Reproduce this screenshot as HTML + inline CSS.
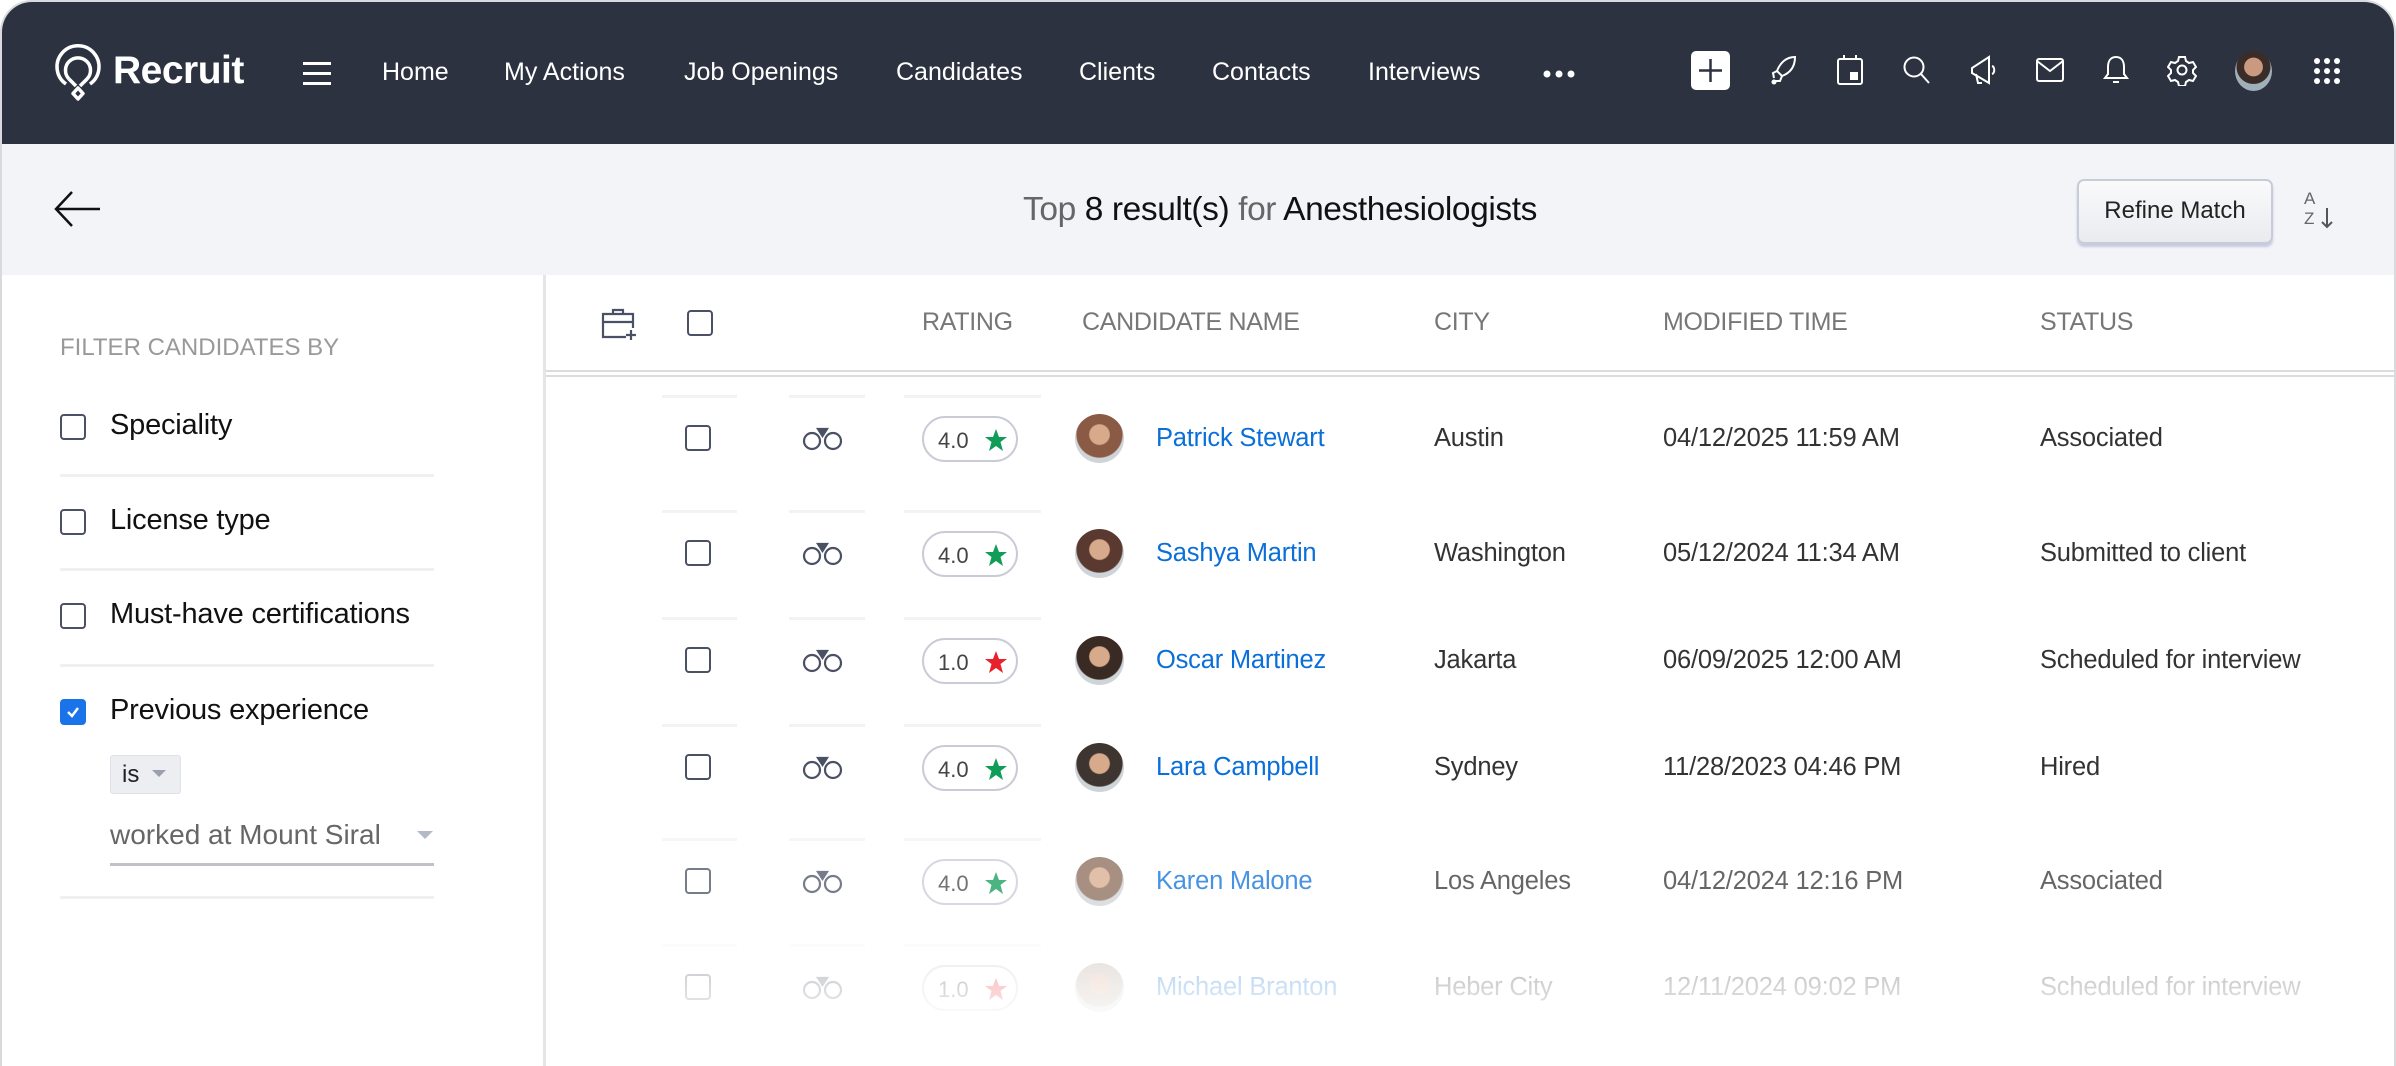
<!DOCTYPE html>
<html><head><meta charset="utf-8"><style>
*{margin:0;padding:0;box-sizing:border-box}
html,body{width:2396px;height:1066px;overflow:hidden}
body{background:#fff;font-family:"Liberation Sans",sans-serif;position:relative}
.a{position:absolute;white-space:nowrap}
.frame{position:absolute;left:0;top:0;width:2396px;height:1066px;border:2px solid #d9dadd;border-bottom:0;border-radius:32px 32px 0 0;overflow:hidden;background:#fff}
.nav{position:absolute;left:0;top:0;width:2396px;height:142px;background:#2c3240}
.nav .t{color:#fff;font-size:25px;top:56px}
.hdr{position:absolute;left:0;top:142px;width:2396px;height:131px;background:#f3f4f8}
.ic{position:absolute;top:52px}
.cb{position:absolute;width:26px;height:26px;border:2.5px solid #4a5164;border-radius:4px;background:#fff}
.hd{color:#777;font-size:25px;top:306px;letter-spacing:-0.3px}
.ft{font-size:29px;color:#111;letter-spacing:-0.2px}
.dv{position:absolute;height:3px;background:#f0f0f2;left:58px;width:374px}
.cell{font-size:25.5px;color:#333;letter-spacing:-0.2px}
.nm{font-size:25.5px;color:#0a6fd8;letter-spacing:-0.2px}
.pill{position:absolute;width:96px;height:46px;border:2px solid #c9ccd6;border-radius:23px;background:#fff}
.pill span{position:absolute;left:14px;top:10px;font-size:22px;color:#444}
.pill svg{position:absolute;left:60px;top:10px}
.av{position:absolute;width:49px;height:49px;border-radius:50%}
.seg{position:absolute;height:3px;background:#f3f3f5}
</style></head><body>
<div class="frame">
<div class="nav">
<svg class="a" style="left:50px;top:42px" width="52" height="58" viewBox="0 0 52 58" fill="none" stroke="#fff" stroke-width="3.5" stroke-linejoin="round"><path d="M14 40 A21 21 0 1 1 38 40"/><path d="M17 35 A12.5 12.5 0 1 1 35 35 L28 42"/><path d="M17 35 L24 42"/><path d="M26 44 L31 49.5 L26 55 L21 49.5 Z"/></svg>
<div class="a" style="left:111px;top:47px;color:#fff;font-size:39px;font-weight:bold;letter-spacing:-0.5px">Recruit</div>
<svg class="a" style="left:301px;top:60px" width="28" height="24"><rect y="0" width="28" height="3" fill="#fff"/><rect y="10" width="28" height="3" fill="#fff"/><rect y="20" width="28" height="3" fill="#fff"/></svg>
<div class="a t" style="left:380px">Home</div>
<div class="a t" style="left:502px">My Actions</div>
<div class="a t" style="left:682px">Job Openings</div>
<div class="a t" style="left:894px">Candidates</div>
<div class="a t" style="left:1077px">Clients</div>
<div class="a t" style="left:1210px">Contacts</div>
<div class="a t" style="left:1366px">Interviews</div>
<svg class="a" style="left:1541px;top:68px" width="32" height="8"><circle cx="4" cy="4" r="3.5" fill="#fff"/><circle cx="16" cy="4" r="3.5" fill="#fff"/><circle cx="28" cy="4" r="3.5" fill="#fff"/></svg>
<div class="a" style="left:1689px;top:49px;width:39px;height:39px;background:#fff;border-radius:5px"></div>
<svg class="a" style="left:1694px;top:54px" width="29" height="29"><path d="M14.5 3V26M3 14.5H26" stroke="#2c3240" stroke-width="2.5"/></svg>
<svg class="ic" style="left:1766px" width="30" height="32" viewBox="0 0 30 32" fill="none" stroke="#fff" stroke-width="2"><path d="M27 3 C18 3 12 9 9 17 L14 22 C22 19 27 13 27 3Z"/><path d="M9 17 L5 19 L6 24 M14 22 L12 27 L7 27"/><circle cx="6" cy="28" r="1.5" fill="#fff"/></svg>
<svg class="ic" style="left:1834px" width="28" height="32" viewBox="0 0 28 32" fill="none" stroke="#fff" stroke-width="2"><rect x="2" y="5" width="24" height="25" rx="2"/><path d="M8 1V6M20 1V6"/><rect x="15" y="19" width="6" height="6" fill="#fff"/></svg>
<svg class="ic" style="left:1900px" width="30" height="32" viewBox="0 0 30 32" fill="none" stroke="#fff" stroke-width="2"><circle cx="12" cy="13" r="9.5"/><path d="M19 20L27 29"/></svg>
<svg class="ic" style="left:1966px" width="30" height="32" viewBox="0 0 30 32" fill="none" stroke="#fff" stroke-width="2"><path d="M21 3 L4 14 L4 19 L21 29 Z"/><path d="M8 20 L10 29 L14 29"/><path d="M24 12 C27 13 27 19 24 20"/></svg>
<svg class="ic" style="left:2033px" width="30" height="32" viewBox="0 0 30 32" fill="none" stroke="#fff" stroke-width="2"><rect x="2" y="5" width="26" height="22" rx="2"/><path d="M2 7 L15 17 L28 7"/></svg>
<svg class="ic" style="left:2100px" width="28" height="32" viewBox="0 0 28 32" fill="none" stroke="#fff" stroke-width="2"><path d="M14 3 C8 3 6 8 6 13 L6 20 L3 24 L25 24 L22 20 L22 13 C22 8 20 3 14 3Z"/><path d="M11 28 L17 28"/></svg>
<svg class="ic" style="left:2165px" width="30" height="32" viewBox="0 0 30 32" fill="none" stroke="#fff" stroke-width="2"><path d="M12 3h6l1 4 3 2 4-1 3 5-3 3v3l3 3-3 5-4-1-3 2-1 4h-6l-1-4-3-2-4 1-3-5 3-3v-3l-3-3 3-5 4 1 3-2z"/><circle cx="15" cy="16" r="4.5"/></svg>
<div class="a" style="left:2233px;top:49px;width:37px;height:40px;border-radius:50%;background:radial-gradient(circle at 50% 40%,#c99a80 0 30%,#3a2c28 32% 55%,#9fb0b8 57%)"></div>
<svg class="a" style="left:2311px;top:55px" width="28" height="28"><g fill="#fff"><circle cx="4" cy="4" r="3"/><circle cx="14" cy="4" r="3"/><circle cx="24" cy="4" r="3"/><circle cx="4" cy="14" r="3"/><circle cx="14" cy="14" r="3"/><circle cx="24" cy="14" r="3"/><circle cx="4" cy="24" r="3"/><circle cx="14" cy="24" r="3"/><circle cx="24" cy="24" r="3"/></g></svg>
</div>
<div class="hdr">
<svg class="a" style="left:52px;top:46px" width="48" height="38" fill="none" stroke="#111" stroke-width="2.5"><path d="M2 19H46M18 2L2 19L18 36"/></svg>
<div class="a" style="left:1021px;top:47px;font-size:33.5px;color:#111;letter-spacing:-0.4px"><span style="color:#666">Top</span> 8 result(s) <span style="color:#666">for</span> Anesthesiologists</div>
<div class="a" style="left:2075px;top:35px;width:196px;height:65px;border:2px solid #c8ccd8;border-radius:7px;background:linear-gradient(#fafafb,#e9ebef);box-shadow:0 3px 2px #c6cbe0;font-size:24px;color:#222;text-align:center;line-height:60px">Refine Match</div>
<div class="a" style="left:2302px;top:45px;font-size:17px;color:#666;line-height:20px">A<br>Z</div>
<svg class="a" style="left:2318px;top:62px" width="14" height="24" fill="none" stroke="#555" stroke-width="2"><path d="M7 2V21M2 16L7 21L12 16"/></svg>
</div>
<div class="a" style="left:541px;top:273px;width:3px;height:793px;background:#e5e5e8"></div>
<div class="a" style="left:58px;top:332px;font-size:24px;color:#999">FILTER CANDIDATES BY</div>
<div class="cb" style="left:58px;top:412px"></div><div class="a ft" style="left:108px;top:407px">Speciality</div>
<div class="dv" style="top:472px"></div>
<div class="cb" style="left:58px;top:507px"></div><div class="a ft" style="left:108px;top:502px">License type</div>
<div class="dv" style="top:566px"></div>
<div class="cb" style="left:58px;top:601px"></div><div class="a ft" style="left:108px;top:596px">Must-have certifications</div>
<div class="dv" style="top:662px"></div>
<div class="cb" style="left:58px;top:697px;background:#1a73e8;border-color:#1a73e8"></div>
<svg class="a" style="left:63px;top:702px" width="16" height="16" fill="none" stroke="#fff" stroke-width="2.5"><path d="M3 8L7 12L13 4"/></svg>
<div class="a ft" style="left:108px;top:692px">Previous experience</div>
<div class="a" style="left:108px;top:753px;width:71px;height:39px;background:#eceef2;border:1.5px solid #dfe1e6;border-radius:3px;font-size:24px;color:#222;padding:5px 0 0 11px">is</div>
<svg class="a" style="left:150px;top:768px" width="14" height="8"><path d="M0 0H14L7 7Z" fill="#9aa0ad"/></svg>
<div class="a" style="left:108px;top:817px;font-size:28px;color:#666">worked at Mount Siral</div>
<svg class="a" style="left:415px;top:829px" width="16" height="9"><path d="M0 0H16L8 8Z" fill="#b4b9c6"/></svg>
<div class="a" style="left:108px;top:861px;width:324px;height:3px;background:#c0c2c8"></div>
<div class="dv" style="top:894px"></div>

<svg class="a" style="left:598px;top:304px" width="38" height="36" fill="none" stroke="#4a5164" stroke-width="2.2"><path d="M13 8V4h10v4"/><path d="M26 31H3V8h30v14M3 16h30"/><path d="M31 24v10M26 29h10"/></svg>
<div class="cb" style="left:685px;top:308px"></div>
<div class="a hd" style="left:920px">RATING</div>
<div class="a hd" style="left:1080px">CANDIDATE NAME</div>
<div class="a hd" style="left:1432px">CITY</div>
<div class="a hd" style="left:1661px">MODIFIED TIME</div>
<div class="a hd" style="left:2038px">STATUS</div>
<div class="a" style="left:544px;top:368px;width:1852px;height:2px;background:#dcdcdf"></div>
<div class="a" style="left:544px;top:373px;width:1852px;height:2px;background:#dcdcdf"></div>

<div id="rows"></div>
<div class="a" style="left:544px;top:960px;width:1852px;height:106px;background:linear-gradient(rgba(255,255,255,0),#fff 80%)"></div>
</div>
<script>
const R=[[437,"Patrick Stewart","Austin","04/12/2025 11:59 AM","Associated","4.0",1,"#8a5a44"],
[552,"Sashya Martin","Washington","05/12/2024 11:34 AM","Submitted to client","4.0",1,"#5a3a30"],
[659,"Oscar Martinez","Jakarta","06/09/2025 12:00 AM","Scheduled for interview","1.0",0,"#3a2a24"],
[766,"Lara Campbell","Sydney","11/28/2023 04:46 PM","Hired","4.0",1,"#3f3530"],
[880,"Karen Malone","Los Angeles","04/12/2024 12:16 PM","Associated","4.0",1,"#8a6a58"],
[986,"Michael Branton","Heber City","12/11/2024 09:02 PM","Scheduled for interview","1.0",0,"#b8a89a"]];
let h="";R.forEach((r,i)=>{const y=r[0];const op=i==4?0.75:i==5?0.3:1;
const st=r[6]?"#0f9d58":"#e8212b";
h+=`<div style="position:absolute;left:0;top:0;opacity:${op}">
<div class="seg" style="left:660px;width:75px;top:${y-44}px"></div><div class="seg" style="left:787px;width:76px;top:${y-44}px"></div><div class="seg" style="left:902px;width:137px;top:${y-44}px"></div>
<div class="cb" style="left:683px;top:${y-14}px"></div>
<svg class="a" style="left:800px;top:${y-13}px" width="42" height="26" fill="none" stroke="#4a5164" stroke-width="2.2"><circle cx="10" cy="15" r="8"/><circle cx="31" cy="15" r="8"/><path d="M16 3h9l-4.5 7z" fill="#4a5164"/></svg>
<div class="pill" style="left:920px;top:${y-23}px"><span>${r[5]}</span><svg width="24" height="24" viewBox="0 0 24 24"><path d="M12 1l3 8h8l-6.5 5 2.5 9L12 18l-7 5 2.5-9L1 9h8z" fill="${st}"/></svg></div>
<div class="av" style="left:1073px;top:${y-25}px;background:radial-gradient(circle at 50% 42%,#d8aa8c 0 26%,${r[7]} 29% 60%,#cfd4d8 63%)"></div>
<div class="a nm" style="left:1154px;top:${y-15}px">${r[1]}</div>
<div class="a cell" style="left:1432px;top:${y-15}px">${r[2]}</div>
<div class="a cell" style="left:1661px;top:${y-15}px">${r[3]}</div>
<div class="a cell" style="left:2038px;top:${y-15}px">${r[4]}</div></div>`});
document.getElementById("rows").outerHTML=h;
</script>
</body></html>
